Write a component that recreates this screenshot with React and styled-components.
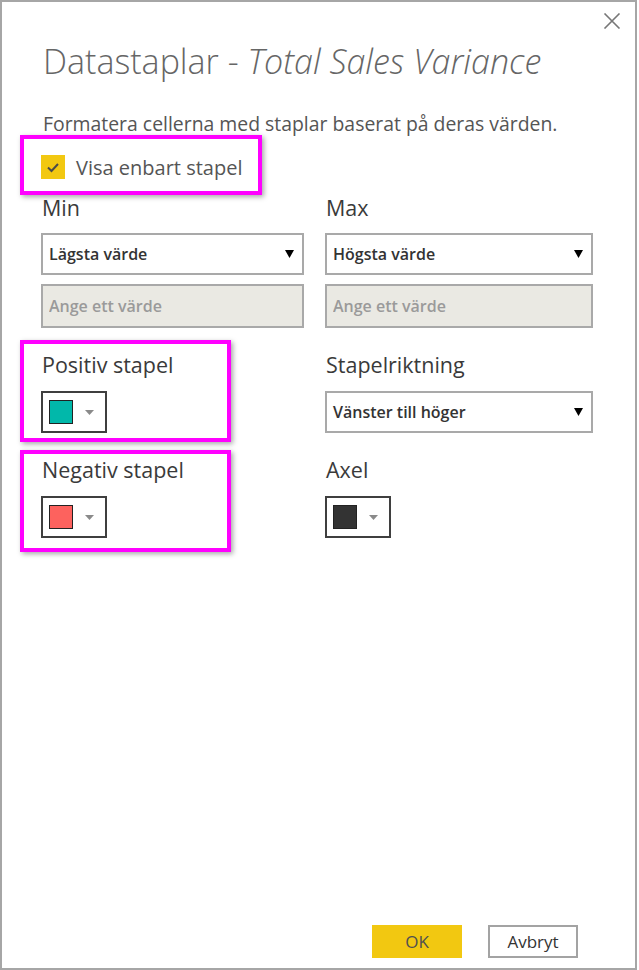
import React from "react"
import styled, { createGlobalStyle } from "styled-components"

const GlobalStyle = createGlobalStyle`
  body {
    margin: 0;
    background: #ffffff;
    font-family: "Open Sans", "Noto Sans", sans-serif;
  }
`

const Frame = styled.div`
  box-sizing: border-box;
  width: 637px;
  height: 970px;
  border: 2px solid #a6a6a6;
  background: #ffffff;
  display: flex;
  flex-direction: column;
  padding: 0 42px 10px 39px;
`

const CloseBar = styled.div`
  display: flex;
  justify-content: flex-end;
  margin-right: -28px;
  padding-top: 11px;
`

const CloseButton = styled.button`
  display: flex;
  padding: 0;
  border: none;
  background: none;
  cursor: pointer;
`

const Title = styled.h1`
  margin: 12px 0 0 2px;
  font-size: 34px;
  line-height: 40px;
  font-weight: 300;
  color: #666666;
  white-space: nowrap;

  em {
    font-style: italic;
  }
`

const Description = styled.p`
  margin: 31px 0 0 2px;
  font-size: 19.4px;
  line-height: 24px;
  color: #555555;
  white-space: nowrap;
`

const Highlight = styled.div`
  position: relative;
  margin-top: ${props => props.$margin || 0}px;

  &::after {
    content: "";
    position: absolute;
    top: ${props => props.$top}px;
    bottom: ${props => props.$bottom}px;
    left: ${props => props.$left}px;
    width: ${props => props.$width}px;
    box-sizing: border-box;
    border: 4px solid #ff00ff;
    box-shadow: 2px 2px 5px rgba(0, 0, 0, 0.35);
    pointer-events: none;
  }
`

const CheckRow = styled.label`
  display: flex;
  align-items: center;
  gap: 11px;
  height: 24px;
  font-size: 20px;
  color: #555555;
  cursor: pointer;
`

const CheckBox = styled.span`
  display: flex;
  align-items: center;
  justify-content: center;
  width: 24px;
  height: 24px;
  background: #f2c811;
`

const Form = styled.div`
  display: grid;
  grid-template-columns: 263px 1fr;
  column-gap: 21px;
  row-gap: 23px;
  margin-top: 15px;
`

const Field = styled.div`
  display: flex;
  flex-direction: column;
  align-items: flex-start;
`

const Label = styled.div`
  margin: 0 0 ${props => props.$gap || 12}px 1px;
  font-size: 21.5px;
  line-height: 28px;
  color: #3a3a3a;
  white-space: nowrap;
`

const Select = styled.div`
  box-sizing: border-box;
  display: flex;
  align-items: center;
  justify-content: space-between;
  width: 100%;
  height: 42px;
  padding: 0 8px 0 6px;
  border: 2px solid #a9a9a9;
  background: #ffffff;
  font-size: 16px;
  font-weight: 600;
  color: #333333;
`

const ValueInput = styled.input`
  box-sizing: border-box;
  width: 100%;
  height: 44px;
  margin-top: 9px;
  padding: 0 6px;
  border: 2px solid #a9a9a9;
  background: #eae9e3;
  font-family: inherit;
  font-size: 16px;
  font-weight: 600;
  color: #333333;
  outline: none;

  &::placeholder {
    color: #9a9a9a;
  }
`

const SwatchButton = styled.button`
  box-sizing: border-box;
  display: flex;
  align-items: center;
  gap: 12px;
  width: 66px;
  height: 42px;
  padding: 0 0 0 6px;
  border: 2px solid #3f3f3f;
  background: #ffffff;
  cursor: pointer;
`

const Swatch = styled.span`
  box-sizing: border-box;
  width: 24px;
  height: 24px;
  border: 1px solid #222222;
  background: ${props => props.$color};
`

const Footer = styled.div`
  display: flex;
  justify-content: flex-end;
  gap: 26px;
  margin-top: auto;
  margin-right: 15px;
`

const DialogButton = styled.button`
  box-sizing: border-box;
  width: 90px;
  height: 33px;
  border: 2px solid ${props => (props.$primary ? "#f2c811" : "#a3a3a3")};
  background: ${props => (props.$primary ? "#f2c811" : "#ffffff")};
  font-family: inherit;
  font-size: 17px;
  color: ${props => (props.$primary ? "#505050" : "#333333")};
  cursor: pointer;
`

const CloseIcon = () => (
  <svg width="18" height="16" viewBox="0 0 18 16">
    <path d="M1.5 0.5 L16.5 15.5 M16.5 0.5 L1.5 15.5" stroke="#777" strokeWidth="1.6" fill="none" />
  </svg>
)

const CheckIcon = () => (
  <svg width="24" height="24" viewBox="0 0 24 24">
    <polyline points="7,12.5 10.5,16 17,9" stroke="#4a4a4a" strokeWidth="2" fill="none" />
  </svg>
)

const DropArrow = () => (
  <svg width="9" height="8" viewBox="0 0 9 8">
    <polygon points="0,0 9,0 4.5,8" fill="#000" />
  </svg>
)

const SwatchArrow = () => (
  <svg width="9" height="5" viewBox="0 0 9 5">
    <polygon points="0,0 9,0 4.5,5" fill="#8a8a8a" />
  </svg>
)

const Dropdown = ({ value }) => (
  <Select>
    <span>{ value }</span>
    <DropArrow />
  </Select>
)

const ColorPicker = ({ color }) => (
  <SwatchButton>
    <Swatch $color={ color } />
    <SwatchArrow />
  </SwatchButton>
)

export default function App() {
  return (
    <>
      <GlobalStyle />
      <Frame>
        <CloseBar>
          <CloseButton aria-label="Stäng">
            <CloseIcon />
          </CloseButton>
        </CloseBar>
        <Title>Datastaplar - <em>Total Sales Variance</em></Title>
        <Description>Formatera cellerna med staplar baserat på deras värden.</Description>
        <Highlight $margin={ 19 } $top={ -20 } $bottom={ -16 } $left={ -21 } $width={ 242 }>
          <CheckRow>
            <CheckBox>
              <CheckIcon />
            </CheckBox>
            Visa enbart stapel
          </CheckRow>
        </Highlight>
        <Form>
          <Field>
            <Label $gap={ 11 }>Min</Label>
            <Dropdown value="Lägsta värde" />
            <ValueInput placeholder="Ange ett värde" />
          </Field>
          <Field>
            <Label $gap={ 11 }>Max</Label>
            <Dropdown value="Högsta värde" />
            <ValueInput placeholder="Ange ett värde" />
          </Field>
          <Highlight $top={ -11 } $bottom={ -9 } $left={ -21 } $width={ 211 }>
            <Field>
              <Label>Positiv stapel</Label>
              <ColorPicker color="#01b8aa" />
            </Field>
          </Highlight>
          <Field>
            <Label>Stapelriktning</Label>
            <Dropdown value="Vänster till höger" />
          </Field>
          <Highlight $top={ -6 } $bottom={ -14 } $left={ -21 } $width={ 211 }>
            <Field>
              <Label>Negativ stapel</Label>
              <ColorPicker color="#fd625e" />
            </Field>
          </Highlight>
          <Field>
            <Label>Axel</Label>
            <ColorPicker color="#333333" />
          </Field>
        </Form>
        <Footer>
          <DialogButton $primary>OK</DialogButton>
          <DialogButton>Avbryt</DialogButton>
        </Footer>
      </Frame>
    </>
  )
}
